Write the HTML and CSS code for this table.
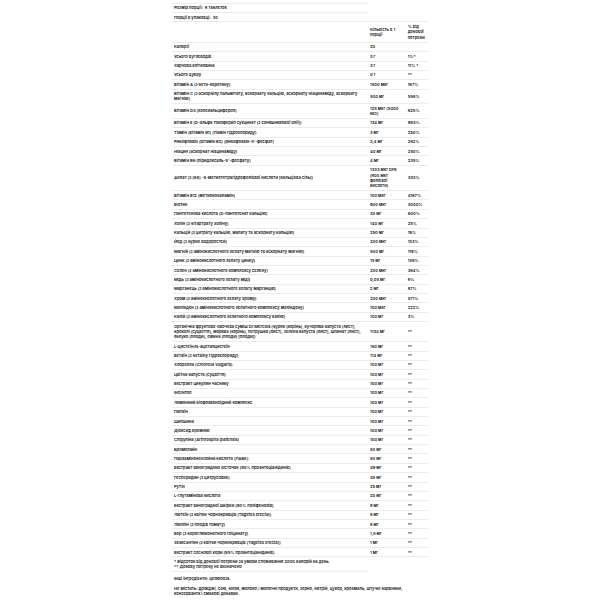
FILE: index.html
```html
<!DOCTYPE html>
<html lang="uk">
<head>
<meta charset="utf-8">
<title>Склад</title>
<link rel="stylesheet" href="styles.css">
</head>
<body>
<div class="panel">
  <div class="serving">
    <div class="serving-row"><span class="lbl">Розмір порції:</span> 8 таблеток</div>
    <div class="serving-row"><span class="lbl">Порції в упаковці:</span> 30</div>
  </div>
  <table class="facts">
    <colgroup><col class="c1"><col class="c2"><col class="c3"></colgroup>
    <thead>
      <tr><th></th><th>Кількість в 1 порції</th><th>% від добової потреби</th></tr>
    </thead>
    <tbody>
      <tr><td>Калорії</td><td>20</td><td></td></tr>
      <tr><td>Усього вуглеводів</td><td>3 г</td><td>1%*</td></tr>
      <tr><td>Харчова клітковина</td><td>3 г</td><td>11% *</td></tr>
      <tr><td>Усього цукру</td><td>0 г</td><td>**</td></tr>
      <tr><td>Вітамін А (з бета-каротину)</td><td>1500 мкг</td><td>167%</td></tr>
      <tr><td>Вітамін С (з аскорбілу пальмітату, аскорбату кальцію, аскорбату ніацинаміду, аскорбату магнію)</td><td>500 мг</td><td>556%</td></tr>
      <tr><td>Вітамін D3 (холекальциферол)</td><td>125 мкг (5000 МО)</td><td>625%</td></tr>
      <tr><td>Вітамін Е (D-альфа токоферил сукцинат (з соняшникової олії))</td><td>134 мг</td><td>893%</td></tr>
      <tr><td>Тіамін (вітамін В1) (тіамін гідрохлориду)</td><td>3 мг</td><td>250%</td></tr>
      <tr><td>Рибофлавін (вітамін В2) (рибофлавін-5'-фосфат)</td><td>3,4 мг</td><td>262%</td></tr>
      <tr><td>Ніацин (аскорбат ніацинаміду)</td><td>40 мг</td><td>250%</td></tr>
      <tr><td>Вітамін В6 (піридоксаль-5'-фосфату)</td><td>4 мг</td><td>235%</td></tr>
      <tr><td>Фолат (з (6S) -5-метилтетрагідрофолієвої кислоти [кальцієва сіль])</td><td>1333 мкг DFE (800 мкг фолієвої кислоти)</td><td>333%</td></tr>
      <tr><td>Вітамін В12 (метилкобаламін)</td><td>100 мкг</td><td>4167%</td></tr>
      <tr><td>Біотин</td><td>900 мкг</td><td>3000%</td></tr>
      <tr><td>Пантотенова кислота (D-пантотенат кальцію)</td><td>30 мг</td><td>600%</td></tr>
      <tr><td>Холін (з бітартрату холіну)</td><td>140 мг</td><td>25%</td></tr>
      <tr><td>Кальцій (з цитрату кальцію, малату та аскорбату кальцію)</td><td>250 мг</td><td>19%</td></tr>
      <tr><td>Йод (з бурих водоростей)</td><td>200 мкг</td><td>133%</td></tr>
      <tr><td>Магній (з амінокислотного хелату магнію та аскорбату магнію)</td><td>500 мг</td><td>119%</td></tr>
      <tr><td>Цинк (з амінокислотного хелату цинку)</td><td>15 мг</td><td>136%</td></tr>
      <tr><td>Селен (з амінокислотного комплексу селену)</td><td>200 мкг</td><td>364%</td></tr>
      <tr><td>Мідь (з амінокислотного хелату міді)</td><td>0,05 мг</td><td>6%</td></tr>
      <tr><td>Марганець (з амінокислотного хелату марганцю)</td><td>2 мг</td><td>87%</td></tr>
      <tr><td>Хром (з амінокислотного хелату хрому)</td><td>200 мкг</td><td>571%</td></tr>
      <tr><td>Молібден (з амінокислотного хелатного комплексу молібдену)</td><td>100 мкг</td><td>222%</td></tr>
      <tr><td>Калій (з амінокислотного хелатного комплексу калію)</td><td>100 мг</td><td>3%</td></tr>
      <tr><td>Органічна фруктово-овочева суміш Dr.Mercola (буряк (корінь), кучерява капуста (лист), броколі (суцвіття), морква (корінь), петрушка (лист), зелена капуста (лист), шпинат (лист), яблуко (плоди), ожина (плоди) [плоди])</td><td>1134 мг</td><td>**</td></tr>
      <tr><td>L-цистеїн/N-ацетилцистеїн</td><td>150 мг</td><td>**</td></tr>
      <tr><td>Бетаїн (з бетаїну гідрохлориду)</td><td>114 мг</td><td>**</td></tr>
      <tr><td>Хлорелла (Chlorella vulgaris)</td><td>100 мг</td><td>**</td></tr>
      <tr><td>Цвітна капуста (суцвіття)</td><td>100 мг</td><td>**</td></tr>
      <tr><td>Екстракт цибулин часнику</td><td>100 мг</td><td>**</td></tr>
      <tr><td>Інозитол</td><td>100 мг</td><td>**</td></tr>
      <tr><td>Лимонний біофлавоноїдний комплекс</td><td>100 мг</td><td>**</td></tr>
      <tr><td>Папаїн</td><td>100 мг</td><td>**</td></tr>
      <tr><td>Шипшина</td><td>100 мг</td><td>**</td></tr>
      <tr><td>Діоксид кремнію</td><td>100 мг</td><td>**</td></tr>
      <tr><td>Спіруліна (Arthrospira platensis)</td><td>100 мг</td><td>**</td></tr>
      <tr><td>Бромелайн</td><td>50 мг</td><td>**</td></tr>
      <tr><td>Параамінобензойна кислота (ПАБК)</td><td>50 мг</td><td>**</td></tr>
      <tr><td>Екстракт виноградних кісточок (95% проантоціанідинів)</td><td>49 мг</td><td>**</td></tr>
      <tr><td>Гесперидин (з цитрусових)</td><td>35 мг</td><td>**</td></tr>
      <tr><td>Рутін</td><td>25 мг</td><td>**</td></tr>
      <tr><td>L-глутамінова кислота</td><td>20 мг</td><td>**</td></tr>
      <tr><td>Екстракт виноградної шкірки (90% поліфенолів)</td><td>8 мг</td><td>**</td></tr>
      <tr><td>Лютеїн (з квітки чорнобривців (Tagetes erecta))</td><td>6 мг</td><td>**</td></tr>
      <tr><td>Лікопін (з плодів томату)</td><td>6 мг</td><td>**</td></tr>
      <tr><td>Бор (з бороглюконатного гліцинату)</td><td>1,5 мг</td><td>**</td></tr>
      <tr><td>Зеаксантин (з квітки чорнобривців (Tagetes erecta))</td><td>1 мг</td><td>**</td></tr>
      <tr><td>Екстракт соснової кори (95% проантоціанідинів)</td><td>1 мг</td><td>**</td></tr>
    </tbody>
  </table>
  <div class="notes">
    <div>* Відсоток від добової потреби за умови споживання 2000 калорій на день.</div>
    <div>** Добову потребу не визначено</div>
  </div>
  <p class="extra">Інші інгредієнти: целюлоза.</p>
  <p class="extra">Не містить: дріжджі, сою, білок, молоко / молочні продукти, зерно, натрій, цукор, крохмаль, штучні барвники, консерванти і смакові добавки.</p>
</div>
</body>
</html>
```
FILE: styles.css
```css
html, body {
  margin: 0;
  padding: 0;
  background: #ffffff;
}
body {
  font-family: Inter, "Noto Sans", "DejaVu Sans", sans-serif;
  font-size: 4.1px;
  font-weight: 600;
  line-height: 5.333px;
  color: #111111;
}
.panel {
  width: 256.7px;
  margin: 0 auto;
  padding-top: 3px;
}
.serving {
  width: 196px;
  border-top: 1px solid #ececec;
}
.serving-row {
  padding: 1.4px 2.3px;
}
.serving-row + .serving-row {
  border-top: 1px solid #ececec;
}
.lbl {
  margin-right: 1px;
}
.facts {
  width: 100%;
  border-collapse: collapse;
  table-layout: fixed;
  border-top: 1px solid #ececec;
}
.c1 { width: 196px; }
.c2 { width: 37.7px; }
.c3 { width: 23px; }
.facts th,
.facts td {
  font-weight: 600;
  text-align: left;
  vertical-align: middle;
  padding: 1.52px 1.5px 1.52px 2.3px;
  border-bottom: 1px solid #ececec;
}
.facts tbody td:nth-child(3) {
  white-space: nowrap;
}
.facts th {
  padding-top: 1.8px;
  padding-bottom: 1.8px;
}
.notes {
  width: 191.4px;
  padding: 2.7px 2.3px 2px;
  line-height: 4.67px;
  border-bottom: 1px solid #ececec;
}
.extra {
  margin: 4px 0 0;
  padding: 0 2.3px;
}
```
